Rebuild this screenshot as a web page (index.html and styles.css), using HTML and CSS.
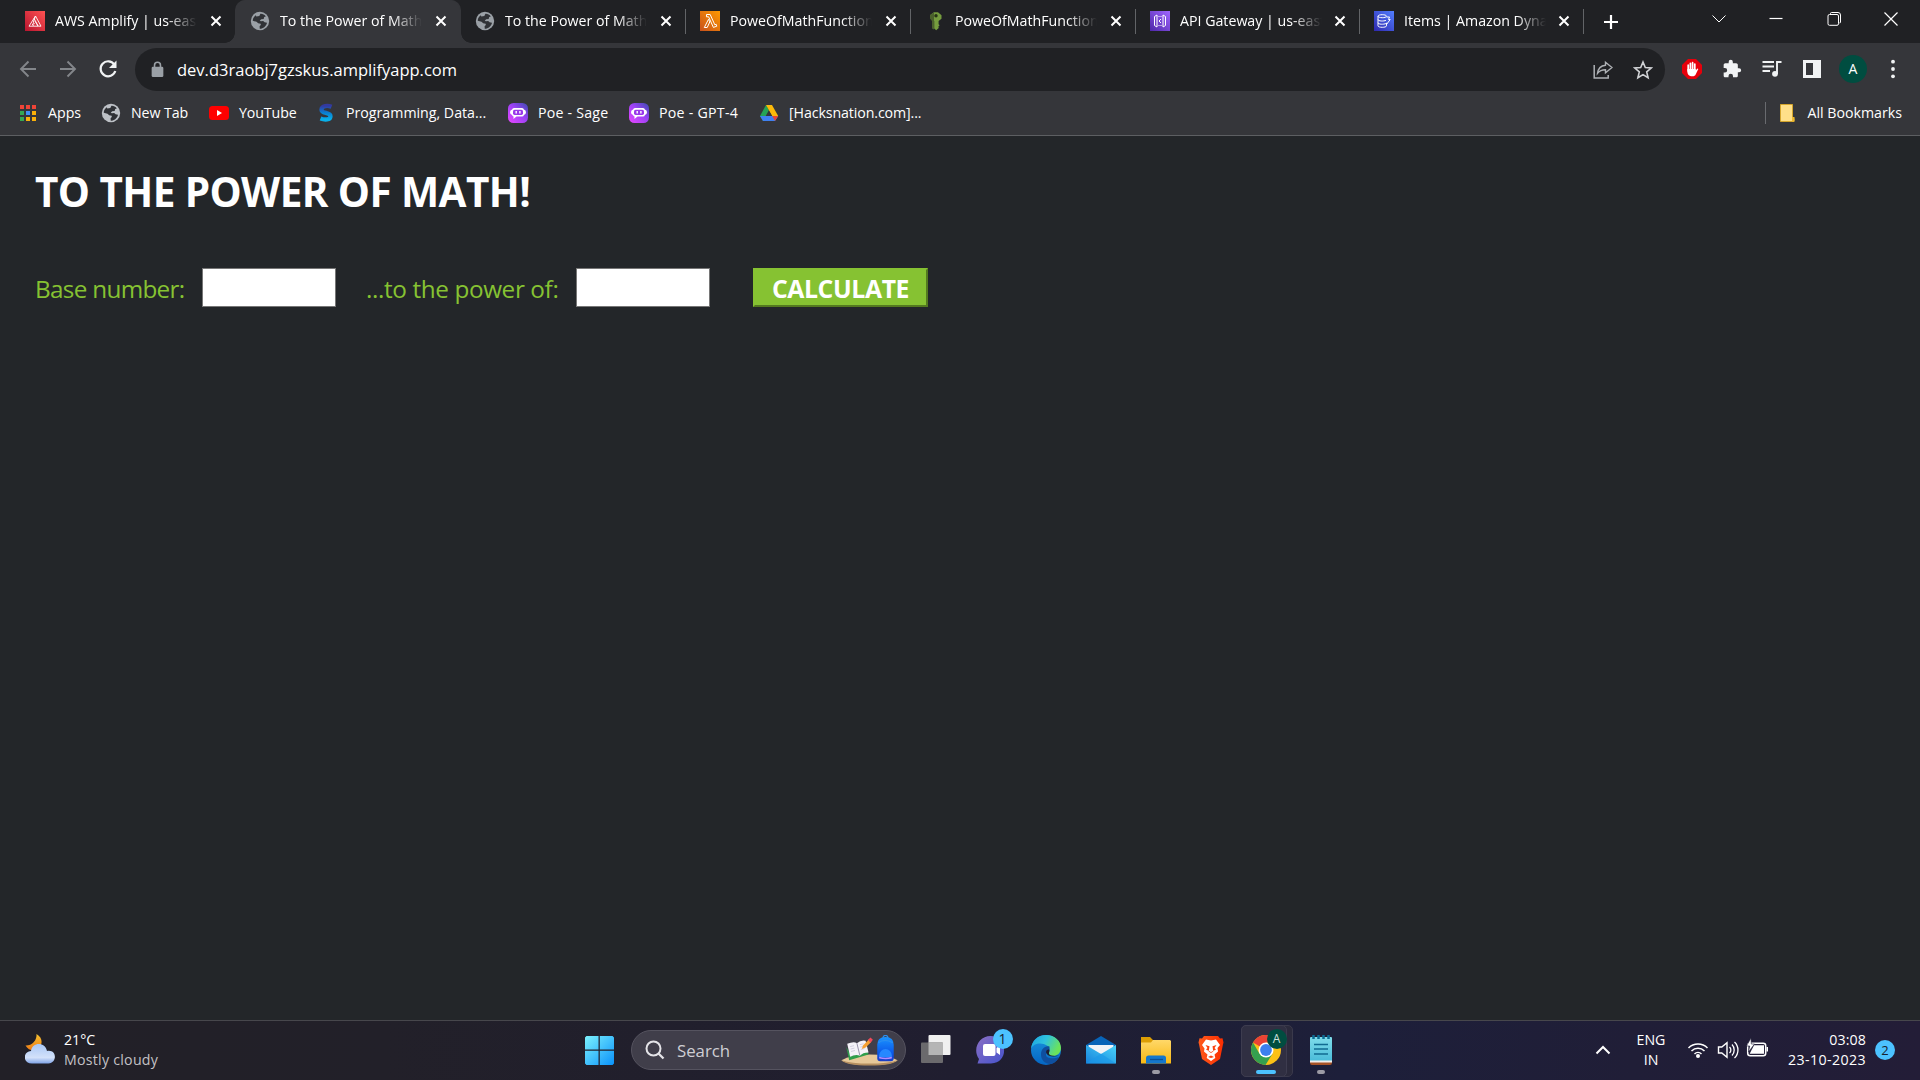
FILE: index.html
```
<!DOCTYPE html>
<html lang="en">
<head>
<meta charset="utf-8">
<title>To the Power of Math!</title>
<link rel="stylesheet" href="styles.css">
</head>
<body>
<svg class="defs" width="0" height="0" aria-hidden="true">
  <defs>
    <linearGradient id="gRed" x1="0" y1="1" x2="1" y2="0"><stop offset="0" stop-color="#b8152f"/><stop offset="1" stop-color="#ff5252"/></linearGradient>
    <linearGradient id="gOrange" x1="0" y1="1" x2="1" y2="0"><stop offset="0" stop-color="#c8511b"/><stop offset="1" stop-color="#ff9900"/></linearGradient>
    <linearGradient id="gPurple" x1="0" y1="1" x2="1" y2="0"><stop offset="0" stop-color="#4d27a8"/><stop offset="1" stop-color="#a166ff"/></linearGradient>
    <linearGradient id="gBlue" x1="0" y1="1" x2="1" y2="0"><stop offset="0" stop-color="#2e27ad"/><stop offset="1" stop-color="#527fff"/></linearGradient>
    <linearGradient id="gS" x1="0" y1="0" x2="0" y2="1"><stop offset="0" stop-color="#3339a0"/><stop offset=".5" stop-color="#0a7fd0"/><stop offset="1" stop-color="#08b0ea"/></linearGradient>
    <linearGradient id="gPoe" x1="0" y1="1" x2="1" y2="0"><stop offset="0" stop-color="#e946ff"/><stop offset=".55" stop-color="#9a42f5"/><stop offset="1" stop-color="#3b4bb0"/></linearGradient>
    <linearGradient id="gWin" x1="0" y1="0" x2="1" y2="1"><stop offset="0" stop-color="#7cf1fd"/><stop offset="1" stop-color="#0a92fb"/></linearGradient>
    <linearGradient id="gCloud" x1="0" y1="0" x2="0" y2="1"><stop offset="0" stop-color="#a9c7f5"/><stop offset=".7" stop-color="#d3e1fa"/><stop offset="1" stop-color="#7fa3e6"/></linearGradient>
    <linearGradient id="gMoon" x1="0" y1="0" x2="0" y2="1"><stop offset="0" stop-color="#f7c331"/><stop offset="1" stop-color="#ee7a15"/></linearGradient>
    <linearGradient id="gChat" x1="0" y1="0" x2="1" y2="1"><stop offset="0" stop-color="#8a6fc4"/><stop offset="1" stop-color="#4653cc"/></linearGradient>
    <linearGradient id="gEdge" x1="0" y1="0" x2="1" y2=".4"><stop offset="0" stop-color="#1aa2e0"/><stop offset=".5" stop-color="#2fc2df"/><stop offset="1" stop-color="#6be35a"/></linearGradient>
    <linearGradient id="gEdge2" x1="0" y1="0" x2="0" y2="1"><stop offset="0" stop-color="#1b94dc"/><stop offset="1" stop-color="#0566c4"/></linearGradient>
    <linearGradient id="gMail" x1="0" y1="1" x2="1" y2="0"><stop offset="0" stop-color="#1683dc"/><stop offset="1" stop-color="#4ad4fa"/></linearGradient>
    <linearGradient id="gFolder" x1="0" y1="0" x2="0" y2="1"><stop offset="0" stop-color="#ffd869"/><stop offset="1" stop-color="#f8b813"/></linearGradient>
    <linearGradient id="gBrave" x1="0" y1="0" x2="1" y2="0"><stop offset="0" stop-color="#ff5a1c"/><stop offset="1" stop-color="#fb2d00"/></linearGradient>
    <linearGradient id="gNote" x1="0" y1="0" x2="0" y2="1"><stop offset="0" stop-color="#7fdcea"/><stop offset="1" stop-color="#46b9d8"/></linearGradient>
    <linearGradient id="gBag" x1="0" y1="0" x2="0" y2="1"><stop offset="0" stop-color="#1a94ff"/><stop offset=".7" stop-color="#0b55e8"/><stop offset="1" stop-color="#1b3cc4"/></linearGradient>
    <symbol id="globe" viewBox="0 0 24 24"><circle cx="12" cy="12" r="11" fill="currentColor"/><path d="M12.500 3.200c2-.3 5 .8 6.500 3.300l-2 .8-.6 2.200-3 .5-1.700 1.800 1.400.5 2.700-.4 1.700 1.600 2.900.6c-.7 4-4.300 7.200-8.700 7.200l-.2-2.900 1.500-1.500-.2-1.700-3-.5-2-1.700L3.300 11.600C3.200 9 5 6 7 5l.6 1.600 3.600-.6z" class="globe-land"/></symbol>
    <symbol id="close" viewBox="0 0 12 12"><path d="M1.500 1.500l9 9m0-9l-9 9" stroke="#fff" stroke-width="2"/></symbol>
    <symbol id="poe" viewBox="0 0 20 20"><rect width="20" height="20" rx="5.500" fill="url(#gPoe)"/><path d="M6 5h8q1.600 0 1.900 1.500Q18 7 18 9.300T15.900 12Q15.600 13.600 14 13.600H8.500L5.500 16v-2.500Q4.300 13.200 4.100 12 2 11.600 2 9.300t2.100-2.800Q4.400 5 6 5z" fill="#fff"/><rect x="5" y="6.700" width="10" height="5.200" rx="1.600" fill="#9a38ea"/><path d="M8.200 8v2.500M11.900 8v2.500" stroke="#fff" stroke-width="1.400"/></symbol>
  </defs>
</svg>

<header class="browser">
  <nav class="tabs">
    <div class="tab">
      <svg class="fav" viewBox="0 0 20 20"><rect width="20" height="20" fill="url(#gRed)"/><path d="M10.500 5L4 15.200h4.500L7.300 13h2l-1-1.800zM9 7.500l4.300 7.700M10.500 5L16 15.200h-2.700M10 10.200l3 5H8.500" fill="none" stroke="#fff" stroke-width=".9"/></svg>
      <span class="tab-title">AWS Amplify | us-east-1</span><svg class="x"><use href="#close"/></svg>
    </div>
    <div class="tab active">
      <svg class="fav globe"><use href="#globe"/></svg>
      <span class="tab-title">To the Power of Math!</span><svg class="x"><use href="#close"/></svg>
    </div>
    <div class="tab sep">
      <svg class="fav globe"><use href="#globe"/></svg>
      <span class="tab-title">To the Power of Math!</span><svg class="x"><use href="#close"/></svg>
    </div>
    <div class="tab sep">
      <svg class="fav" viewBox="0 0 20 20"><rect width="20" height="20" fill="url(#gOrange)"/><path d="M6.500 3.500h3.700l4.600 10.300 1.400-.5.600 1.900-3.400 1.200-4.800-10.600H6.500zM8.500 8.300l1.300 2.600-2.600 5.600H4.300z" fill="none" stroke="#fff" stroke-width="1"/></svg>
      <span class="tab-title">PoweOfMathFunction</span><svg class="x"><use href="#close"/></svg>
    </div>
    <div class="tab sep">
      <svg class="fav" viewBox="0 0 20 20"><path d="M9 1.200h4l3.500 3v3.500L13.600 10v3.200l1 1-1.200 1.300.3 1.500-2.500 2.200-2-1.700V10L5.500 7.800 5.200 4z" fill="#759c3e"/><path d="M5.200 4L9 1.200v17.300l-2-1V10L5.300 8z" fill="#4b612c"/><circle cx="11" cy="4.800" r="1.700" fill="#263216"/></svg>
      <span class="tab-title">PoweOfMathFunction</span><svg class="x"><use href="#close"/></svg>
    </div>
    <div class="tab sep narrow">
      <svg class="fav" viewBox="0 0 20 20"><rect width="20" height="20" fill="url(#gPurple)"/><path d="M7 4L4.500 5.500v9L7 16zM13 4l2.500 1.500v9L13 16zM8.500 5.500h1m1 0h1m-3 9h1m1 0h1M11 8l-2 2 2 2" fill="none" stroke="#fff" stroke-width="1"/></svg>
      <span class="tab-title">API Gateway | us-east-1</span><svg class="x"><use href="#close"/></svg>
    </div>
    <div class="tab sep narrow">
      <svg class="fav" viewBox="0 0 20 20"><rect width="20" height="20" fill="url(#gBlue)"/><path d="M4 5.200c0-2 8.500-2 8.500 0s-8.500 2-8.500 0v9.600c0 2 8.500 2 8.500 0v-3M4 8.500c0 1.800 6 1.900 8 .8M4 11.700c0 1.800 6 1.900 8 .8M12.500 6h3l-1 2.500h1.700l-3.700 5" fill="none" stroke="#fff" stroke-width="1"/></svg>
      <span class="tab-title">Items | Amazon DynamoDB</span><svg class="x"><use href="#close"/></svg>
    </div>
    <svg class="plus" viewBox="0 0 16 16"><path d="M8 1v14M1 8h14" stroke="#fff" stroke-width="2.200"/></svg>
    <div class="window-buttons">
      <svg viewBox="0 0 16 16"><path d="M1.500 4.500L8 11l6.500-6.500" stroke="#fff" fill="none"/></svg>
      <svg viewBox="0 0 16 16"><path d="M1.500 7.500h13" stroke="#fff" stroke-width="1.200"/></svg>
      <svg viewBox="0 0 16 16"><path d="M4.500 3V2.500A1 1 0 0 1 5.500 1.500H12a2.500 2.500 0 0 1 2.500 2.500v7a1 1 0 0 1-1 1" stroke="#fff" fill="none"/><rect x="2" y="3.500" width="10.500" height="10.800" rx="1.500" stroke="#fff" fill="none"/></svg>
      <svg viewBox="0 0 16 16"><path d="M1.500 1.500l13 13m0-13l-13 13" stroke="#fff" stroke-width="1.200"/></svg>
    </div>
  </nav>

  <div class="toolbar">
    <div class="nav-buttons">
      <svg viewBox="0 0 20 20"><path d="M18 10H3m7.500-7.500L3 10l7.500 7.500" fill="none" stroke="#83868a" stroke-width="1.900"/></svg>
      <svg viewBox="0 0 20 20"><path d="M2 10h15m-7.500-7.500L17 10l-7.500 7.500" fill="none" stroke="#83868a" stroke-width="1.900"/></svg>
      <svg viewBox="0 0 20 20"><path d="M16.300 5.500A7.500 7.500 0 1 0 17.300 12" fill="none" stroke="#f1f3f4" stroke-width="2.200"/><path d="M18.500 1.500V9H11z" fill="#f1f3f4"/></svg>
    </div>
    <div class="omnibox">
      <svg class="lock" viewBox="0 0 12 16"><rect x=".5" y="5.500" width="11" height="9.500" rx="1.200" fill="#9aa0a6"/><path d="M3.200 6V4a2.800 2.800 0 0 1 5.600 0v2" fill="none" stroke="#9aa0a6" stroke-width="1.500"/></svg>
      <span class="url">dev.d3raobj7gzskus.amplifyapp.com</span>
      <svg class="share" viewBox="0 0 20 20"><path d="M1.200 5v13h14v-3" fill="none" stroke="#aeb1b5" stroke-width="1.500"/><path d="M12.500 2.200L19 7.500l-6.500 5.200V9.800c-3.700 0-6 1-8 3.600.5-4.500 3-7.700 8-8.200z" fill="none" stroke="#aeb1b5" stroke-width="1.400"/></svg>
      <svg class="star" viewBox="0 0 20 20"><path d="M10 2l2.300 5.500 5.900.5-4.500 3.900 1.400 5.800L10 14.600l-5.100 3.100 1.400-5.800L1.800 8l5.900-.5z" fill="none" stroke="#d0d2d5" stroke-width="1.600"/></svg>
    </div>
    <div class="extensions">
      <svg viewBox="0 0 20 20"><path d="M6 0h8l6 6v8l-6 6H6l-6-6V6z" fill="#e6000b"/><path d="M6.200 6.200V12M8.400 4.300V11M10.600 3.700V11M12.800 5V12" stroke="#fff" stroke-width="1.700" stroke-linecap="round"/><path d="M5.400 10h8.300v1.500l1.600-2 1 .6-2.500 5.200c-.6 1.400-1.600 2-3.400 2-3.500 0-5-2-5-4.500z" fill="#fff"/></svg>
      <svg viewBox="0 0 24 24"><path d="M20.500 11H19V7c0-1.100-.9-2-2-2h-4V3.500a2.500 2.500 0 0 0-5 0V5H4c-1.100 0-2 .9-2 2v3.800h1.500a2.700 2.700 0 0 1 0 5.400H2V20c0 1.100.9 2 2 2h3.800v-1.500a2.700 2.700 0 0 1 5.400 0V22H17c1.100 0 2-.9 2-2v-4h1.500a2.500 2.500 0 0 0 0-5z" fill="#f1f3f4"/></svg>
      <svg viewBox="0 0 20 20"><path d="M.5 3h11.500M.5 7.500h11.500M.5 12h7.500" stroke="#f1f3f4" stroke-width="1.900"/><circle cx="13" cy="14.800" r="2.900" fill="#f1f3f4"/><path d="M15 15V3h4.500" fill="none" stroke="#f1f3f4" stroke-width="1.900"/></svg>
      <svg viewBox="0 0 20 20"><path d="M1 1h18v18H1zM4 4v12h7V4z" fill="#f1f3f4" fill-rule="evenodd"/></svg>
      <span class="avatar">A</span>
      <svg class="menu" viewBox="0 0 20 20"><circle cx="10" cy="2.700" r="1.900" fill="#f1f3f4"/><circle cx="10" cy="10" r="1.900" fill="#f1f3f4"/><circle cx="10" cy="17.300" r="1.900" fill="#f1f3f4"/></svg>
    </div>
  </div>

  <div class="bookmarks">
    <div class="bookmark w-apps"><svg viewBox="0 0 20 20"><path d="M2 2h4v4H2zM8 2h4v4H8zM14 2h4v4h-4z" fill="#f04437"/><path d="M2 8h4v4H2zM2 14h4v4H2z" fill="#34a853"/><path d="M8 8h4v4H8z" fill="#4090f5"/><path d="M14 8h4v4h-4zM8 14h4v4H8zM14 14h4v4h-4z" fill="#fbb10a"/></svg><span>Apps</span></div>
    <div class="bookmark w-new"><svg class="globe light"><use href="#globe"/></svg><span>New Tab</span></div>
    <div class="bookmark w-yt"><svg viewBox="0 0 20 20"><rect y="3" width="20" height="14" rx="3.500" fill="#f00"/><path d="M8 7l5 3-5 3z" fill="#fff"/></svg><span>YouTube</span></div>
    <div class="bookmark w-prog"><svg viewBox="0 0 20 20"><path d="M15.500 3.800C12 2.300 5.500 2.500 5.500 6.700c0 4.300 9 2 9 6.500 0 4-6 3.800-10 2.300" fill="none" stroke="url(#gS)" stroke-width="4.300"/></svg><span>Programming, Data...</span></div>
    <div class="bookmark w-sage"><svg><use href="#poe"/></svg><span>Poe - Sage</span></div>
    <div class="bookmark w-gpt"><svg><use href="#poe"/></svg><span>Poe - GPT-4</span></div>
    <div class="bookmark w-hack"><svg viewBox="0 0 20 20"><path d="M7 2L1 13l3 5 6-11z" fill="#25a355"/><path d="M7 2h6l6.200 11h-6z" fill="#fbb90a"/><path d="M1 13l3 5h12l3.200-5h-6z" fill="#3f80f0"/><path d="M13.200 13h6L16 18z" fill="#ea4435"/><path d="M10 8l-3 5h6z" fill="#35363a"/></svg><span>[Hacksnation.com]...</span></div>
    <div class="bookmark all"><svg viewBox="0 0 20 20"><path d="M3.500 1.500h12v14h1.500v3H3.500z" fill="#ffe089" stroke="#d5a62c"/><path d="M15 18.500v-4.500h2.500v4.500z" fill="#edb92e"/></svg><span>All Bookmarks</span></div>
  </div>
</header>

<main class="page">
  <h1>TO THE POWER OF MATH!</h1>
  <form class="calc">
    <label class="base" for="base">Base number:</label>
    <input id="base" type="text">
    <label class="exponent" for="exponent">...to the power of:</label>
    <input id="exponent" type="text">
    <button type="button">CALCULATE</button>
  </form>
</main>

<footer class="taskbar">
  <div class="weather">
    <svg viewBox="0 0 30 30"><path d="M11.500 0a10.500 10.500 0 0 1-11 11.500C3 16 8 17.500 12 15.500 18 12 18.500 4 11.500 0z" fill="url(#gMoon)"/><path d="M7 29.500c-9.500 0-9.500-12-1-12.500 1-9.500 14.500-9.500 16 0 10-2 10.500 12 1.500 12.500z" fill="url(#gCloud)"/></svg>
    <div class="weather-text"><span>21°C</span><span class="dim">Mostly cloudy</span></div>
  </div>
  <svg class="start" viewBox="0 0 30 30"><path d="M1.500 0H14v14H0V1.500zM15.300 0h13.200L30 1.500V14H15.300zM0 15.300h14V30H1.500L0 28.500zM15.300 15.300H30v13.200L28.500 30H15.300z" fill="url(#gWin)"/></svg>
  <div class="search">
    <svg class="lens" viewBox="0 0 20 20"><circle cx="8.500" cy="8.500" r="7" fill="none" stroke="#e4e4e8" stroke-width="2"/><path d="M13.500 13.500l5 5" stroke="#e4e4e8" stroke-width="2.300"/></svg>
    <span>Search</span>
    <svg class="scene" viewBox="0 0 58 32"><path d="M0 26Q10 20 29 20t29 6q-7 5-29 5T0 26z" fill="#e6c899"/><path d="M0 26q10 3.500 29 3.500T58 26q-5 5.500-29 5.500T0 26z" fill="#b58f60"/><path d="M5 12l3 14 20-6-1-4-17 6z" fill="#2f9e4b"/><path d="M6 9q7-3 10-.5Q20 5 25 6l3 12q-6 0-9 3.500-4-2-10 1z" fill="#f4f2f8"/><path d="M16 8.500L19 21" stroke="#9590a8" fill="none"/><path d="M9 12l4-1m-3.500 3.500l4-1m-3.500 3.500l4-1M19 10l4-1m-3.500 3.500l4-1m-3.500 3.500l4-1" stroke="#c9c5d8" stroke-width=".8" fill="none"/><path d="M21 14.500l1.500-4 6-6 2.500 2.500-6 6z" fill="#f5a032"/><path d="M27.500 5l2.500-2.500 2.500 2.500-2.500 3z" fill="#f0495a"/><path d="M37 10q0-8 8.500-8T54 10v14q0 3-3 3H40q-3 0-3-3z" fill="url(#gBag)"/><path d="M43 3q0-2.500 2.500-2.500T48 3M38 8q7-5 15 0" fill="none" stroke="#2b8ff0" stroke-width="1.300"/><path d="M39 21a6.500 6.500 0 0 1 13 0v2H39z" fill="#2688ff"/><path d="M39 22.500q6 2 13 0v1.800q-6 1.500-13 0z" fill="#b58cff"/></svg>
  </div>
  <div class="apps">
    <div class="app"><svg viewBox="0 0 30 30"><rect x="7.500" y="0" width="22" height="20" rx="1" fill="#f0f0f0"/><rect x="0" y="7.500" width="22" height="20.500" rx="1" fill="#6b6a6d"/><path d="M7.500 7.500H22V20H7.500z" fill="#b5b5b5"/></svg></div>
    <div class="app"><svg viewBox="0 0 30 30"><path d="M14.500 1C31 1 34 28 15 28.500H1.500L3 24C-4 14 3 1 14.500 1z" fill="url(#gChat)"/><rect x="7" y="9" width="12.500" height="12" rx="2" fill="#fff"/><path d="M20.500 13l3.500-2.500v9.500l-3.500-2.500z" fill="#fff"/></svg><span class="count">1</span></div>
    <div class="app"><svg viewBox="0 0 30 30"><circle cx="15" cy="15" r="15" fill="url(#gEdge2)"/><path d="M0 14C1 5 7 0 15 0c9 0 15 6 15 13 0 5-4 8-8.500 8-4 0-5-1.500-3.500-3.500 1-1.500 1-5-2-7C11 7 2 8 0 14z" fill="url(#gEdge)"/><path d="M18.500 11.500c-5-1-8.500 3-8.500 8 0 6 5 10 10 9.500 4-1 6.500-4 8-7-5 2-14 2-13-3 .5-2 2-2.500 3.500-3.500z" fill="#0f4f9f"/><path d="M18 14.500c-2.500-.5-3.500 2-2.500 4 1.500 3 7 4 12.500 2-4 .8-8 .5-9.500-1-1.500-1.500.8-3-.5-5z" fill="#1f1e30"/></svg></div>
    <div class="app"><svg viewBox="0 0 30 30"><path d="M0 10L15 1l15 9v6H0z" fill="#0864b8"/><path d="M2.500 10h25v8L15 22 2.500 18z" fill="#f1f3f7"/><path d="M0 10l15 9 15-9v18.500H0z" fill="url(#gMail)"/><path d="M0 28.500l15-10 15 10z" fill="#1a97e8" opacity=".6"/></svg></div>
    <div class="app"><svg viewBox="0 0 30 30"><path d="M0 2h9l3 3h6v7H0z" fill="#dd9e04"/><path d="M0 7.500h10l2-2.500h17l1 1v22.500H0z" fill="url(#gFolder)"/><path d="M5 28.500V23q0-2.500 2.500-2.500h15Q25 20.500 25 23v5.500z" fill="#1577cc"/><path d="M9 24.500h13" stroke="#0b4f96" stroke-width="1.300"/></svg><i class="dot"></i></div>
    <div class="app"><svg viewBox="0 0 30 30"><path d="M8 1h14l2 2.500 2.500-.3 1 4.300-.5 1.700L24 24l-9 6-9-6L3 9.200l-.5-1.700 1-4.300 2.500.3z" fill="url(#gBrave)"/><path d="M15 5.500l5-1 4 5.500-2.500 3 .5 3.500-3.500 3 .8 3.500-4.300 3-4.300-3 .8-3.500L8 16.500l.5-3L6 10l4-5.500z" fill="#fff"/><path d="M9.500 10l4 1.300-.8 5.200L15 18l2.300-1.500-.8-5.200 4-1.300-2 3 1.500 1.500-4 2-1 .8-1-.8-4-2 1.500-1.500zM12 22l3-1.500 3 1.500-3 1z" fill="#fb4210"/></svg></div>
    <div class="app current"><svg viewBox="0 0 30 30"><circle cx="15" cy="15" r="15" fill="#fbc116"/><path d="M15 15L2 7.500A15 15 0 0 1 28 7.500H15z" fill="#ea4335"/><path d="M2 7.500A15 15 0 0 0 14.500 30L21.500 18.700 15 15 8.500 18.700z" fill="#34a04f"/><circle cx="15" cy="15" r="7.500" fill="#fff"/><circle cx="15" cy="15" r="5.900" fill="#3c7fee"/></svg><span class="count profile">A</span><i class="dot wide"></i></div>
    <div class="app"><svg viewBox="0 0 30 30"><rect x="4" y="2" width="22" height="26" rx="1" fill="url(#gNote)"/><path d="M4 26h22v1.500q0 2.500-2 2.500H6q-2 0-2-2.500z" fill="#a65327"/><path d="M4 25.500h22v2H4z" fill="#eee"/><path d="M8 9.500h14M8 14h14M8 19h14" stroke="#116b91" stroke-width="1.700"/><path d="M7.500 0v4M12.500 0v4M17.500 0v4M22.500 0v4" stroke="#0d6c94" stroke-width="2.500"/></svg><i class="dot"></i></div>
  </div>
  <div class="tray">
    <svg class="chev" viewBox="0 0 16 10"><path d="M1.500 8.500L8 2l6.500 6.500" fill="none" stroke="#fff" stroke-width="2"/></svg>
    <div class="lang"><span>ENG</span><span>IN</span></div>
    <svg class="sys" viewBox="0 0 22 22"><path d="M1.500 9a13.500 13.500 0 0 1 19 0M4.500 12a9.300 9.300 0 0 1 13 0M7.500 15a5 5 0 0 1 7 0" fill="none" stroke="#fff" stroke-width="1.500"/><circle cx="11" cy="17" r="2" fill="#fff"/></svg>
    <svg class="sys" viewBox="0 0 22 22"><path d="M1.500 8h3.300L10 3.700v14.600L4.800 14H1.500z" fill="none" stroke="#fff" stroke-width="1.400"/><path d="M12.500 8a4 4 0 0 1 0 6M15 5.500a8 8 0 0 1 0 11M17.500 3a11 11 0 0 1 0 16" fill="none" stroke="#fff" stroke-width="1.300"/></svg>
    <svg class="sys battery" viewBox="0 0 22 22"><rect x="1.700" y="5.200" width="18" height="12.600" rx="2.500" fill="none" stroke="#fff" stroke-width="1.500"/><path d="M8 7.200h10v8.600H3.700z" fill="#fff"/><path d="M20.500 9H22v4.500h-1.500z" fill="#fff"/><path d="M5 0L.5 8h3.200L2.500 14 8.500 6H5.300z" fill="#fff" stroke="#201e35" stroke-width=".6"/></svg>
    <div class="clock"><span>03:08</span><span class="date">23-10-2023</span></div>
    <span class="notify">2</span>
  </div>
</footer>
</body>
</html>
```
FILE: styles.css
```
* { box-sizing: border-box; }
body {
  margin: 0;
  width: 1920px;
  height: 1080px;
  overflow: hidden;
  display: flex;
  flex-direction: column;
  background: #232629;
  color: #fff;
  font-family: "Open Sans", "Noto Sans", sans-serif;
  font-size: 14.2px;
}
.defs { position: absolute; }
svg { display: block; flex: none; }

/* Tab strip */
.browser { height: 136px; background: #35363a; border-bottom: 1px solid #5d5f62; flex: none; }
.tabs { height: 43px; padding-left: 10px; display: flex; align-items: center; background: #202124; }
.tab { width: 225px; height: 43px; padding: 0 0 1px 15px; display: flex; align-items: center; position: relative; flex: none; }
.tab.narrow { width: 224px; }
.tab.active { background: #35363a; border-radius: 10px 10px 0 0; box-shadow: 1px 0 #35363a; }
.tab.active::before, .tab.active::after {
  content: ""; position: absolute; bottom: 0; width: 10px; height: 10px;
}
.tab.active::before { left: -10px; background: radial-gradient(circle at 0 0, #202124 9.5px, #35363a 10px); }
.tab.active::after { right: -11px; background: radial-gradient(circle at 100% 0, #202124 9.5px, #35363a 10px); }
.tab.sep::after { content: ""; position: absolute; right: -1px; top: 9px; width: 1px; height: 25px; background: #626467; }
.fav { width: 20px; height: 20px; }
.globe { color: #9aa0a6; }
.globe.light { color: #bdc1c6; }
.globe-land { fill: #303236; }
.tab-title {
  width: 144px; margin-left: 10px; overflow: hidden; white-space: nowrap; line-height: 20px; flex: none;
  -webkit-mask-image: linear-gradient(90deg, #000 112px, transparent 142px);
  mask-image: linear-gradient(90deg, #000 112px, transparent 142px);
}
.x { width: 12px; height: 12px; margin-left: 11px; }
.narrow .x { margin-left: 10px; }
.plus { width: 16px; height: 16px; margin-left: 20px; }
.window-buttons { margin: -6px 21px 0 auto; display: flex; gap: 41.300px; }
.window-buttons svg { width: 16px; height: 16px; }

/* Toolbar */
.toolbar { height: 48px; padding-top: 5px; display: flex; }
.nav-buttons { width: 135px; height: 43px; padding-left: 18px; display: flex; align-items: center; gap: 20px; margin-top: -1px; }
.nav-buttons svg { width: 20px; height: 20px; }
.omnibox { width: 1530px; height: 43px; padding: 0 12px 0 16px; border-radius: 22px; background: #202124; display: flex; align-items: center; }
.lock { width: 13px; height: 17px; }
.url { margin: 1px auto 0 13px; font-size: 16.500px; line-height: 24px; }
.share { width: 20px; height: 20px; }
.star { width: 20px; height: 20px; margin-left: 20px; }
.extensions { height: 42px; padding-left: 17px; display: flex; align-items: center; gap: 20px; }
.extensions svg { width: 20px; height: 20px; }
.extensions .menu { margin-left: -1px; }
.avatar { width: 28px; height: 28px; margin: 0 -3px; border-radius: 50%; background: #004d40; font-size: 14px; line-height: 28px; text-align: center; }

/* Bookmarks bar */
.bookmarks { height: 44px; padding-left: 18px; display: flex; align-items: center; }
.bookmark { display: flex; align-items: center; gap: 10px; white-space: nowrap; line-height: 20px; }
.bookmark svg { width: 20px; height: 20px; }
.w-apps { width: 83px; }
.w-new { width: 108px; letter-spacing: -.1px; }
.w-yt { width: 107px; letter-spacing: -.1px; }
.w-prog { width: 192px; }
.w-sage { width: 121px; letter-spacing: .2px; }
.w-gpt { width: 130px; letter-spacing: .25px; }
.w-hack { letter-spacing: -.1px; }
.all { margin-left: auto; padding: 1px 18px 1px 11px; border-left: 1px solid #696b6f; }

/* Page */
.page { flex: 1; padding: 31px 35px; }
h1 { margin: 0; font-size: 40.500px; line-height: 50px; font-weight: 700; letter-spacing: -.6px; white-space: nowrap; }
.calc { margin-top: 51px; height: 39px; display: flex; align-items: center; color: #86c232; font-size: 24.300px; white-space: nowrap; }
.calc label { line-height: 34px; padding-top: 3px; }
.base { width: 167px; letter-spacing: -.7px; }
.exponent { width: 210px; margin-left: 30px; letter-spacing: -.38px; }
.calc input { width: 134px; height: 39px; padding: 0; border: 1px solid #767676; background: #fff; }
.calc button {
  width: 175px; height: 39px; margin-left: 43px; padding: 1px 0 0; background: #86c232; border: 2px solid;
  border-color: #86c232 #53791f #53791f #86c232; color: #fff; font: 700 24.800px/34px "Open Sans", sans-serif; letter-spacing: -.4px;
}

/* Taskbar */
.taskbar {
  height: 60px; flex: none; display: flex; align-items: center; border-top: 1px solid #47474c; padding-bottom: 1px;
  background: linear-gradient(90deg, #222027 0, #222029 20%, #201e30 50%, #1d1f3a 70%, #201e37 85%, #231d37 100%);
}
.weather { width: 585px; padding-left: 25px; display: flex; align-items: center; gap: 9px; }
.weather svg { width: 30px; height: 30px; margin-top: -3px; }
.weather-text, .lang, .clock { display: flex; flex-direction: column; line-height: 20px; }
.dim { color: #c2c1c5; letter-spacing: .25px; }
.start { width: 29px; height: 29px; }
.search {
  width: 275px; height: 40px; margin-left: 17px; padding: 0 7px 0 13px; border-radius: 20px; border: 1px solid #55535f;
  background: #403e4a; display: flex; align-items: center; color: #cfced4; font-size: 16.800px;
}
.lens { width: 20px; height: 20px; }
.search span { margin: 0 auto 0 12px; }
.scene { width: 57px; height: 31px; }
.apps { margin-left: 2.500px; display: flex; }
.app { width: 55px; height: 50px; padding-top: 10px; display: flex; justify-content: center; position: relative; }
.app svg { width: 30px; height: 30px; }
.app.current::before { content: ""; position: absolute; left: 2.500px; top: 0; width: 50px; height: 50px; border: 1px solid #3a394b; border-radius: 5px; background: #2b2a3c; }
.app.current::after { content: ""; position: absolute; left: 2.500px; top: 0; width: 44px; height: 50px; border: 1px solid #3d3c4f; border-radius: 5px; background: #302f42; }
.app.current svg, .app.current .count, .app.current .dot { z-index: 1; }
.app.current svg { position: relative; }
.dot { position: absolute; left: 23.500px; bottom: 1px; width: 8px; height: 4px; border-radius: 2px; background: #9c9ba5; }
.dot.wide { left: 17.500px; width: 20px; background: #4cc2ff; }
.count { position: absolute; left: 29px; top: 4px; width: 20px; height: 20px; border-radius: 50%; background: #4cc2ff; color: #182330; font-size: 14px; line-height: 20px; text-align: center; }
.count.profile { left: 28px; background: #004d40; color: #cfe0dd; font-size: 12px; }
.tray { margin-left: auto; padding-right: 25px; display: flex; align-items: center; }
.chev { width: 16px; height: 10px; }
.lang { width: 50px; margin-left: 15px; text-align: center; }
.sys { width: 22px; height: 22px; margin-left: 8px; }
.lang + .sys { margin-left: 11px; }
.battery { margin: -2px 1px 0 7px; }
.clock { width: 97px; text-align: right; letter-spacing: .1px; }
.date { letter-spacing: .4px; }
.notify { width: 20px; height: 20px; margin-left: 9px; border-radius: 50%; background: #4cc2ff; color: #182330; font-size: 13px; line-height: 20px; text-align: center; }
```
